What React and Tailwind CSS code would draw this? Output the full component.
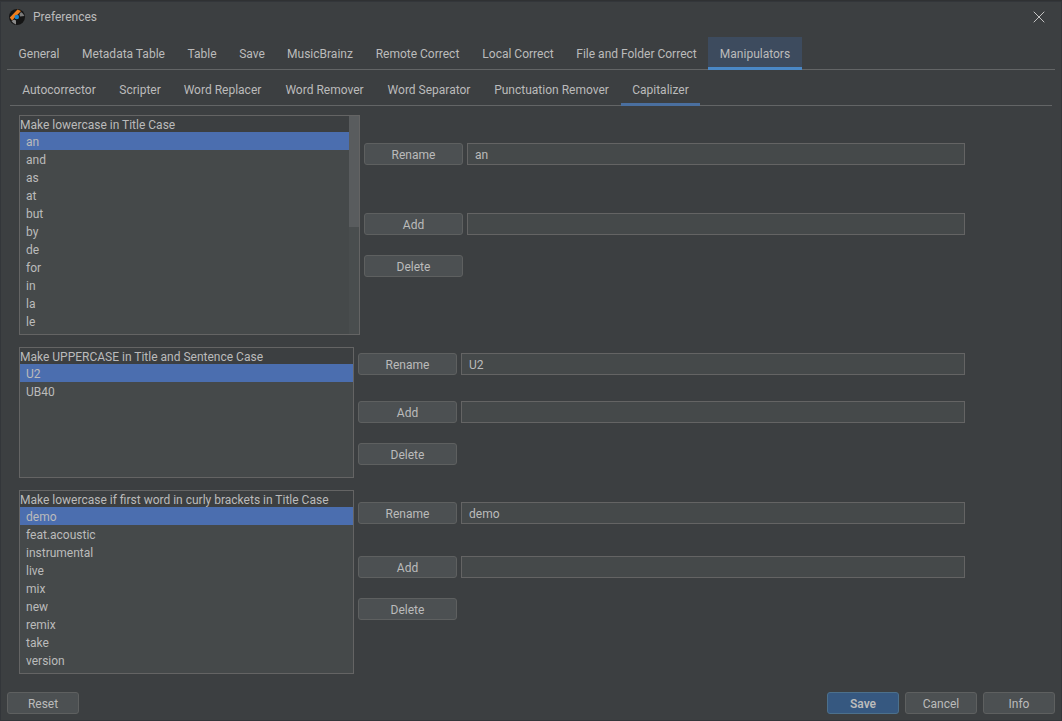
import React from "react";
import { X } from "lucide-react";

const mainTabs = [
  ["General", "w-[64px]"],
  ["Metadata Table", "w-[105px]"],
  ["Table", "w-[52px]"],
  ["Save", "w-[48px]"],
  ["MusicBrainz", "w-[88px]"],
  ["Remote Correct", "w-[107px]"],
  ["Local Correct", "w-[94px]"],
  ["File and Folder Correct", "w-[143px]"],
];

const subTabs = [
  ["Autocorrector", "w-[98px]"],
  ["Scripter", "w-[64px]"],
  ["Word Replacer", "w-[101px]"],
  ["Word Remover", "w-[103px]"],
  ["Word Separator", "w-[106px]"],
  ["Punctuation Remover", "w-[139px]"],
];

function Btn({ children, className = "" }) {
  return (
    <div className={`h-[22px] pt-px flex items-center justify-center rounded-[3px] border border-[#5e6060] bg-[#4c5052] text-[#bbbbbb] ${className}`}>
      {children}
    </div>
  );
}

function Field({ value }) {
  return (
    <div className="flex-1 h-[22px] pt-px flex items-center px-[7px] border border-[#646464] bg-[#45494a] text-[#bbbbbb]">
      {value}
    </div>
  );
}

function Rows({ title, items }) {
  return (
    <div className="flex-1 min-w-0">
      <div className="h-[16px] leading-[19px] bg-[#3c3f41] text-[#bbbbbb]">{title}</div>
      {items.map((it, i) => (
        <div key={it} className={`h-[18px] pl-[6px] leading-[20px] text-[#bbbbbb] ${i === 0 ? "bg-[#4b6eaf]" : ""}`}>
          {it}
        </div>
      ))}
    </div>
  );
}

function Logo() {
  return (
    <svg width="16" height="16" viewBox="0 0 16 16">
      <circle cx="8" cy="8" r="8" fill="#141414" />
      <path d="M0.8 8.5 L8.5 0.6 L12 2 L3 11.5 Z" fill="#ee7d1c" />
      <circle cx="7.8" cy="8" r="2.3" fill="#1c7fc4" />
      <path d="M2.5 12 A7.5 7.5 0 0 0 7 15.4 L7 11.5 L5 10.5 Z" fill="#8a8a8a" />
      <path d="M12 3 A7.5 7.5 0 0 1 15.4 7 L11 7.5 L10.5 5 Z" fill="#7a7a7a" />
    </svg>
  );
}

export default function App() {
  return (
    <div className="w-[1062px] h-[721px] overflow-hidden flex flex-col bg-[#3c3f41] text-[12px] border-t border-[#2f3133] ring-1 ring-inset ring-[#33363a] font-['Roboto',sans-serif]">
      <div className="h-[36px] shrink-0 flex items-center pb-[4px] pl-[9px] pr-[13px] text-[#bbbbbb]">
        <Logo />
        <span className="ml-2">Preferences</span>
        <X size={20} strokeWidth={1.2} className="ml-auto text-[#c4c4c4]" />
      </div>

      <div className="mx-[7px] flex h-[33px] shrink-0 border-b border-[#636566] text-[#bbbbbb]">
        {mainTabs.map(([t, w]) => (
          <div key={t} className={`${w} flex items-center justify-center pt-[2px]`}>{t}</div>
        ))}
        <div className="w-[94px] flex items-center justify-center bg-[#3d4b5e] border-b-[3px] border-[#4a88c7] -mb-px pt-[4px]">Manipulators</div>
      </div>

      <div className="mx-[10px] mt-[3px] flex h-[33px] shrink-0 border-b border-[#636566] text-[#bbbbbb]">
        {subTabs.map(([t, w]) => (
          <div key={t} className={`${w} flex items-center justify-center pt-px`}>{t}</div>
        ))}
        <div className="w-[79px] flex items-center justify-center border-b-[3px] border-[#4a6f9f] -mb-px pt-[3px]">Capitalizer</div>
      </div>

      <div className="pl-[19px] pr-[97px] flex flex-col">
        <div className="mt-[9px] flex h-[220px]">
          <div className="w-[341px] h-full border border-[#646464] bg-[#45494a] flex">
            <Rows title="Make lowercase in Title Case" items={["an", "and", "as", "at", "but", "by", "de", "for", "in", "la", "le"]} />
            <div className="w-[10px] bg-[#494d4e]">
              <div className="h-[111px] bg-[#595c5e]" />
            </div>
          </div>
          <div className="flex-1 ml-1 pt-[28px]">
            <div className="flex gap-1">
              <Btn className="w-[99px]">Rename</Btn>
              <Field value="an" />
            </div>
            <div className="flex gap-1 mt-[48px]">
              <Btn className="w-[99px]">Add</Btn>
              <Field value="" />
            </div>
            <Btn className="w-[99px] mt-5">Delete</Btn>
          </div>
        </div>

        <div className="mt-3 flex h-[131px]">
          <div className="w-[335px] h-full border border-[#646464] bg-[#45494a] flex">
            <Rows title="Make UPPERCASE in Title and Sentence Case" items={["U2", "UB40"]} />
          </div>
          <div className="flex-1 ml-1 pt-[6px]">
            <div className="flex gap-1">
              <Btn className="w-[99px]">Rename</Btn>
              <Field value="U2" />
            </div>
            <div className="flex gap-1 mt-[26px]">
              <Btn className="w-[99px]">Add</Btn>
              <Field value="" />
            </div>
            <Btn className="w-[99px] mt-5">Delete</Btn>
          </div>
        </div>

        <div className="mt-3 flex h-[184px]">
          <div className="w-[335px] h-full border border-[#646464] bg-[#45494a] flex">
            <Rows title="Make lowercase if first word in curly brackets in Title Case" items={["demo", "feat.acoustic", "instrumental", "live", "mix", "new", "remix", "take", "version"]} />
          </div>
          <div className="flex-1 ml-1 pt-[12px]">
            <div className="flex gap-1">
              <Btn className="w-[99px]">Rename</Btn>
              <Field value="demo" />
            </div>
            <div className="flex gap-1 mt-[32px]">
              <Btn className="w-[99px]">Add</Btn>
              <Field value="" />
            </div>
            <Btn className="w-[99px] mt-5">Delete</Btn>
          </div>
        </div>
      </div>

      <div className="mt-[18px] mx-[7px] flex">
        <Btn className="w-[72px]">Reset</Btn>
        <Btn className="w-[72px] ml-auto !bg-[#365880] !border-[#4c708c] font-semibold">Save</Btn>
        <Btn className="w-[72px] ml-[6px]">Cancel</Btn>
        <Btn className="w-[72px] ml-[6px]">Info</Btn>
      </div>
    </div>
  );
}
